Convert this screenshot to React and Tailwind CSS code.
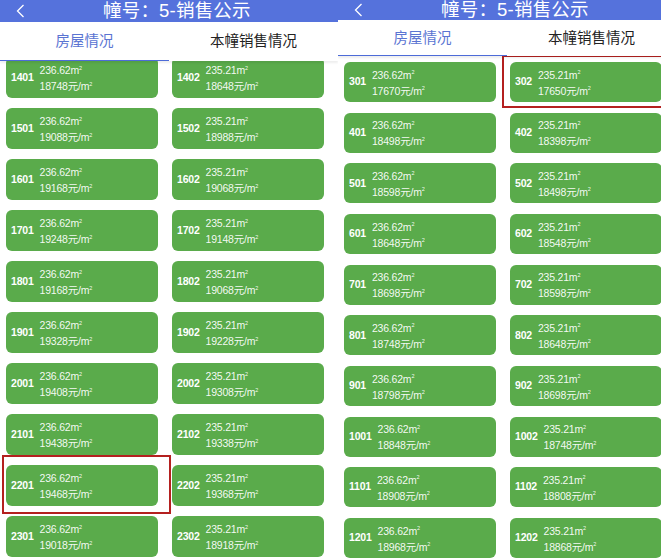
import React from "react";

const FONT = { fontFamily: '"Liberation Sans", "Noto Sans CJK SC", sans-serif' };

const leftRows = [
  ["1401", "18748", "1402", "18648"],
  ["1501", "19088", "1502", "18988"],
  ["1601", "19168", "1602", "19068"],
  ["1701", "19248", "1702", "19148"],
  ["1801", "19168", "1802", "19068"],
  ["1901", "19328", "1902", "19228"],
  ["2001", "19408", "2002", "19308"],
  ["2101", "19438", "2102", "19338"],
  ["2201", "19468", "2202", "19368"],
  ["2301", "19018", "2302", "18918"],
];

const rightRows = [
  ["301", "17670", "302", "17650"],
  ["401", "18498", "402", "18398"],
  ["501", "18598", "502", "18498"],
  ["601", "18648", "602", "18548"],
  ["701", "18698", "702", "18598"],
  ["801", "18748", "802", "18648"],
  ["901", "18798", "902", "18698"],
  ["1001", "18848", "1002", "18748"],
  ["1101", "18908", "1102", "18808"],
  ["1201", "18968", "1202", "18868"],
];

function Sq() {
  return (
    <span>
      m<span className="relative -top-[4.5px] text-[5.5px] leading-none">2</span>
    </span>
  );
}

function Card({ no, area, price, tall, mark }) {
  return (
    <div className={`relative flex w-[152px] items-center rounded-[6px] bg-[#5aab4b] pl-[5px] text-white ${tall ? "h-[41px]" : "h-[40px]"}`}>
      <span className="text-[10.5px] font-bold tracking-[-0.2px]">{no}</span>
      <div className="ml-[6px] flex flex-col pt-[1px] text-[10.5px] leading-[16px] tracking-[-0.2px] text-white/95">
        <span>{area}<Sq /></span>
        <span>{price}元/<Sq /></span>
      </div>
      {mark === "left" && (
        <div className="absolute -left-[4px] -top-[10px] -right-[13px] -bottom-[8px] border-[2.5px] border-[#b4201f]" />
      )}
      {mark === "right" && (
        <div className="absolute -left-[8px] -top-[7px] -right-[12px] -bottom-[6px] border-[2.5px] border-[#b4201f]" />
      )}
    </div>
  );
}

function Panel({ rows, tall, listClass, gapClass, markNo, markSide }) {
  return (
    <div className="flex h-[558px] w-[338px] shrink-0 flex-col overflow-hidden bg-white" style={FONT}>
      {/* title bar, cut at the top */}
      <div className="flex h-[22px] items-center bg-[#5572dc] text-white">
        <svg width="9" height="14" viewBox="0 0 9 14" className="ml-[16px]">
          <polyline points="7.5,1 1.5,7 7.5,13" fill="none" stroke="white" strokeWidth="1.3" />
        </svg>
        <span className="ml-[78px] text-[18.5px] leading-none tracking-[0.2px]">幢号：5-销售公示</span>
      </div>

      {/* tabs */}
      <div className="relative z-10 flex h-[39px] bg-white shadow-[0_2px_2px_rgba(0,0,0,0.07)]">
        <div className="flex w-1/2 items-center justify-center border-b-[1.5px] border-[#4d6bd8] pt-[2px] text-[14.5px] text-[#5a74d2]">
          房屋情况
        </div>
        <div className="flex w-1/2 items-center justify-center pt-[1px] text-[14.5px] text-[#222]">
          本幢销售情况
        </div>
      </div>

      {/* units */}
      <div className={`flex flex-col pl-[6px] ${listClass} ${gapClass}`}>
        {rows.map(([a, pa, b, pb]) => (
          <div key={a} className="flex gap-[14px]">
            <Card no={a} area="236.62" price={pa} tall={tall} mark={markNo === a ? markSide : null} />
            <Card no={b} area="235.21" price={pb} tall={tall} mark={markNo === b ? markSide : null} />
          </div>
        ))}
      </div>
    </div>
  );
}

export default function App() {
  return (
    <div className="flex h-[558px] w-[661px] overflow-hidden bg-white">
      <Panel rows={leftRows} tall listClass="-mt-[4px]" gapClass="gap-[10px]" markNo="2201" markSide="left" />
      <Panel rows={rightRows} listClass="pt-[6px]" gapClass="gap-[10.67px]" markNo="302" markSide="right" />
    </div>
  );
}
